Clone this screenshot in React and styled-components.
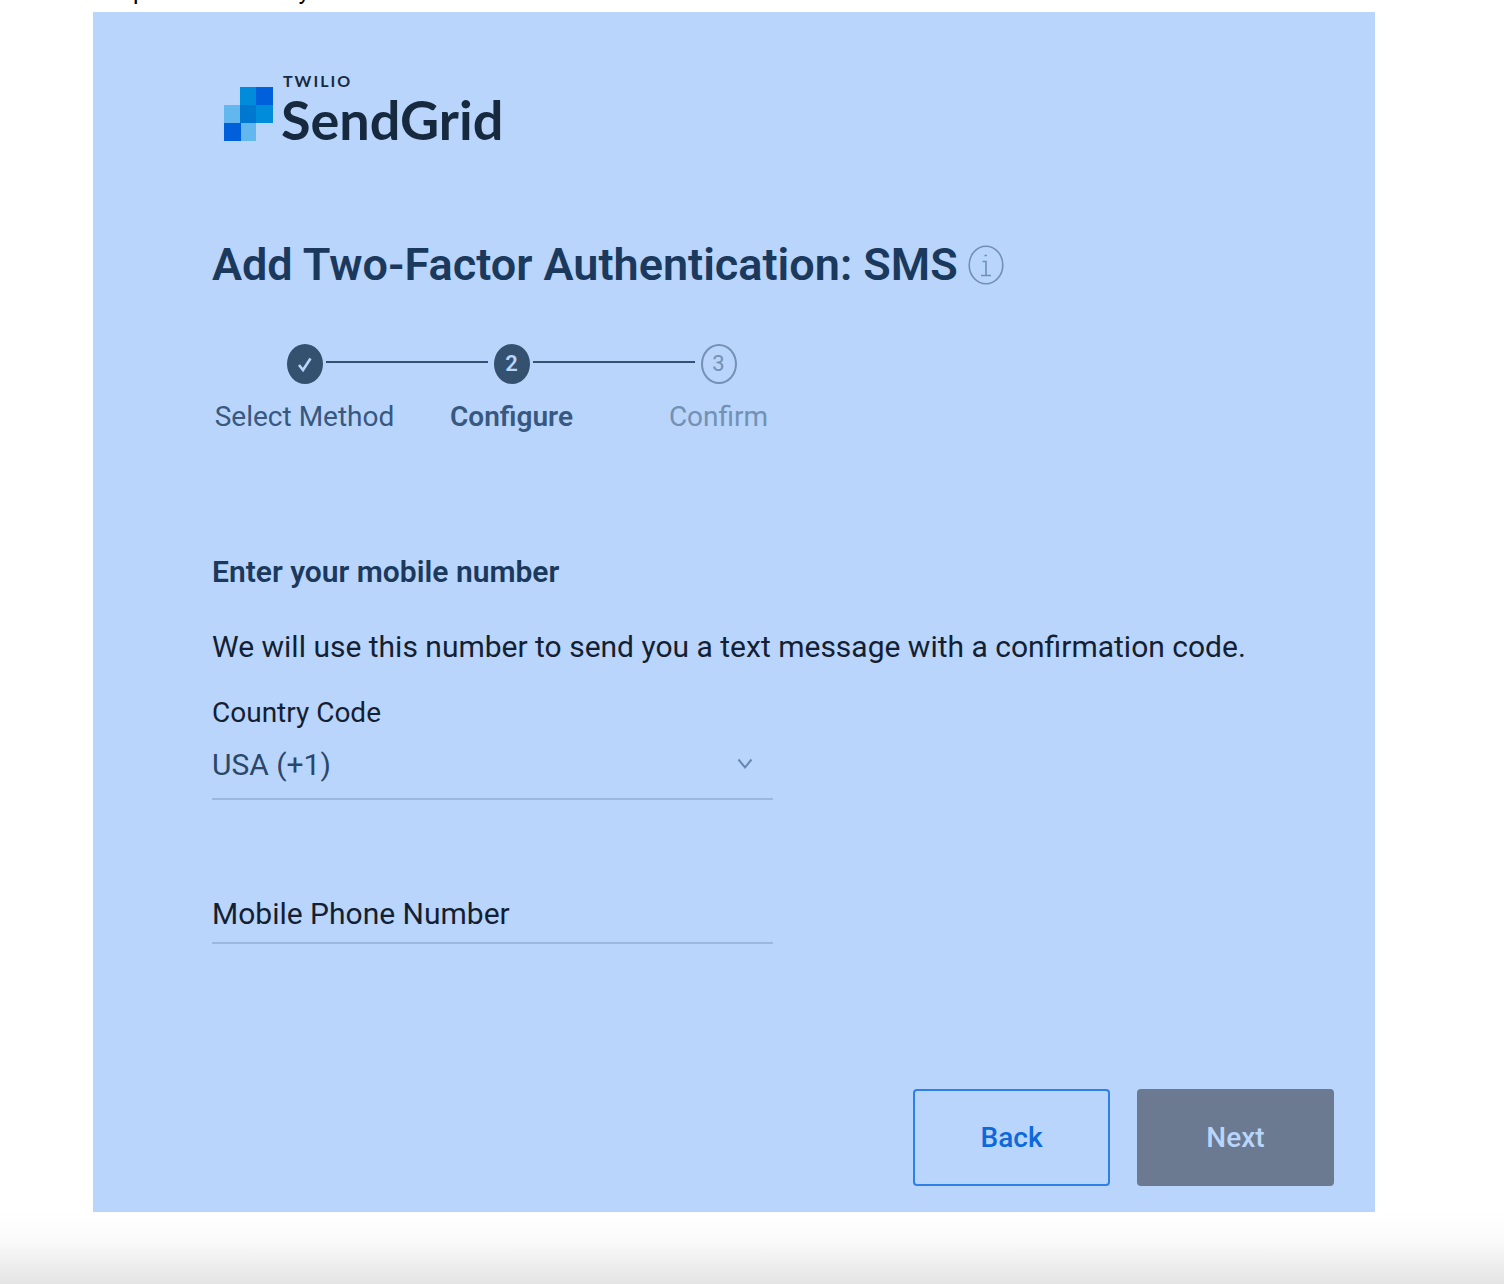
import React from "react";
import styled, { createGlobalStyle } from "styled-components";

const GlobalStyle = createGlobalStyle`
  * { box-sizing: border-box; }
  body { margin: 0; background: #fff; font-family: Roboto, "Liberation Sans", sans-serif; }
  h1, h2, p, ol { margin: 0; padding: 0; }
`;

const Page = styled.div`
  min-height: 100vh;
  display: flex;
  flex-direction: column;
`;

const ClippedLine = styled.header`
  height: 12px;
  padding-left: 133px;
  display: flex;
  align-items: flex-end;
  gap: 152px;
  overflow: hidden;
  font-size: 24px;
  line-height: 42px;
  color: #000;
`;

const Card = styled.main`
  margin: 0 129px 0 93px;
  padding: 61px 41px 26px 119px;
  background: #b9d5fb;
  color: #141f33;
`;

const Logo = styled.div`
  display: flex;
  align-items: flex-start;
  gap: 8px;
  padding-left: 12px;
`;

const Mark = styled.svg`
  margin-top: 14px;
`;

const Wordmark = styled.div`
  display: flex;
  flex-direction: column;
  gap: 4px;
  font-family: Lato, sans-serif;
  color: #17293f;
`;

const Parent = styled.span`
  font-size: 16px;
  line-height: 16px;
  font-weight: 700;
  letter-spacing: 2px;
  padding-left: 2px;
`;

const Brand = styled.span`
  font-size: 54px;
  line-height: 54px;
  font-weight: 700;
`;

const TitleRow = styled.div`
  display: flex;
  align-items: center;
  gap: 10px;
  margin-top: 88px;
`;

const Title = styled.h1`
  font-size: 45px;
  line-height: 60px;
  font-weight: 600;
  color: #1b395c;
`;

const InfoButton = styled.button`
  display: flex;
  padding: 0;
  border: 0;
  background: none;
  color: #6f8fb8;
`;

const Steps = styled.ol`
  display: flex;
  list-style: none;
  margin: 49px 0 0 -11px;
`;

const Step = styled.li`
  position: relative;
  width: 207px;
  display: flex;
  flex-direction: column;
  align-items: center;
  gap: 15px;
  font-size: 28px;
  line-height: 36px;
  font-weight: ${(p) => (p.$current ? 600 : 400)};
  color: ${(p) => (p.$pending ? "#7390b5" : "#38587f")};

  &:not(:first-child)::before {
    content: "";
    position: absolute;
    top: 17px;
    right: calc(50% + 24px);
    width: calc(100% - 45px);
    height: 2px;
    background: #34516f;
  }
`;

const Marker = styled.span`
  width: 36px;
  height: 40px;
  display: flex;
  align-items: center;
  justify-content: center;
  border: 2px solid ${(p) => (p.$pending ? "#7390b5" : "#34516f")};
  border-radius: 50%;
  background: ${(p) => (p.$pending ? "transparent" : "#34516f")};
  color: ${(p) => (p.$pending ? "#7390b5" : "#b9d5fb")};
  font-size: 22px;
  line-height: 36px;
`;

const Form = styled.form`
  margin-top: 119px;
  display: flex;
  flex-direction: column;
`;

const Subtitle = styled.h2`
  font-size: 30px;
  line-height: 36px;
  font-weight: 600;
  color: #1b395c;
`;

const Description = styled.p`
  margin-top: 39px;
  font-size: 30px;
  line-height: 36px;
`;

const Field = styled.div`
  position: relative;
  display: flex;
  flex-direction: column;
  width: 561px;
  max-width: 100%;
  margin-top: ${(p) => p.$gap}px;
  border-bottom: 2px solid #9cb8de;
`;

const Label = styled.label`
  font-size: ${(p) => (p.$large ? 30 : 28)}px;
  line-height: 36px;
`;

const Select = styled.select`
  appearance: none;
  height: 67px;
  padding: 0;
  border: 0;
  background: none;
  font: 400 30px/67px Roboto, "Liberation Sans", sans-serif;
  color: #2a4769;
`;

const Chevron = styled.svg`
  position: absolute;
  right: 20px;
  bottom: 27px;
  pointer-events: none;
`;

const PhoneBox = styled.div`
  display: grid;

  & > * { grid-area: 1 / 1; }
`;

const PhoneInput = styled.input`
  width: 100%;
  height: 46px;
  padding: 0;
  border: 0;
  background: none;
  font: 400 30px/46px Roboto, "Liberation Sans", sans-serif;
  color: #141f33;
`;

const Actions = styled.div`
  display: flex;
  justify-content: flex-end;
  gap: 27px;
  margin-top: 145px;
`;

const Button = styled.button`
  width: 197px;
  height: 97px;
  border: 2px solid ${(p) => (p.$primary ? "#6b7a91" : "#2f80e6")};
  border-radius: 4px;
  background: ${(p) => (p.$primary ? "#6b7a91" : "transparent")};
  color: ${(p) => (p.$primary ? "#b9d5fb" : "#0c69dc")};
  font: 500 28px/36px Roboto, "Liberation Sans", sans-serif;
`;

const Fade = styled.footer`
  flex: 1;
  min-height: 72px;
  background: linear-gradient(#fff, #fafafa 40%, #e4e4e4);
`;

const LogoMark = () => (
  <Mark width="49" height="54" viewBox="0 0 49 54" aria-hidden="true">
    <path fill="#008cdb" d="M16 0h17v18H16zM32 18h17v18H32z" />
    <path fill="#0060dc" d="M32 0h17v18H32zM0 36h17v18H0z" />
    <path fill="#62b7ee" d="M0 18h16v18H0zM17 36h15v18H17z" />
    <path fill="#0078d0" d="M16 18h16v18H16z" />
  </Mark>
);

export default function App() {
  return (
    <Page>
      <GlobalStyle />
      <ClippedLine aria-hidden="true">
        <span>p</span>
        <span>y</span>
      </ClippedLine>
      <Card>
        <Logo>
          <LogoMark />
          <Wordmark>
            <Parent>TWILIO</Parent>
            <Brand>SendGrid</Brand>
          </Wordmark>
        </Logo>
        <TitleRow>
          <Title>Add Two-Factor Authentication: SMS</Title>
          <InfoButton type="button" aria-label="More information">
            <svg width="36" height="40" viewBox="0 0 36 40" fill="none" stroke="currentColor" strokeWidth="1.6">
              <ellipse cx="18" cy="20" rx="16.8" ry="18.8" />
              <path d="M14.500 16.500H18V30.500M13 30.500h10M16.500 10.500h2.500" />
            </svg>
          </InfoButton>
        </TitleRow>
        <Steps>
          <Step>
            <Marker>
              <svg width="16" height="18" viewBox="0 0 16 18" fill="none" stroke="currentColor" strokeWidth="2.6" aria-hidden="true">
                <path d="M2 10l4 5L13.500 3.500" />
              </svg>
            </Marker>
            Select Method
          </Step>
          <Step $current aria-current="step">
            <Marker>2</Marker>
            Configure
          </Step>
          <Step $pending>
            <Marker $pending>3</Marker>
            Confirm
          </Step>
        </Steps>
        <Form onSubmit={(e) => e.preventDefault()}>
          <Subtitle>Enter your mobile number</Subtitle>
          <Description>
            We will use this number to send you a text message with a confirmation code.
          </Description>
          <Field $gap={30}>
            <Label htmlFor="country">Country Code</Label>
            <Select id="country">
              <option>USA (+1)</option>
            </Select>
            <Chevron width="16" height="14" viewBox="0 0 16 14" fill="none" stroke="#6686b0" strokeWidth="2" aria-hidden="true">
              <path d="M1.500 2.500L8 10.500l6.500-8" />
            </Chevron>
          </Field>
          <Field $gap={96}>
            <PhoneBox>
              <Label $large htmlFor="phone">Mobile Phone Number</Label>
              <PhoneInput id="phone" type="tel" />
            </PhoneBox>
          </Field>
          <Actions>
            <Button type="button">Back</Button>
            <Button type="submit" $primary>Next</Button>
          </Actions>
        </Form>
      </Card>
      <Fade />
    </Page>
  );
}
